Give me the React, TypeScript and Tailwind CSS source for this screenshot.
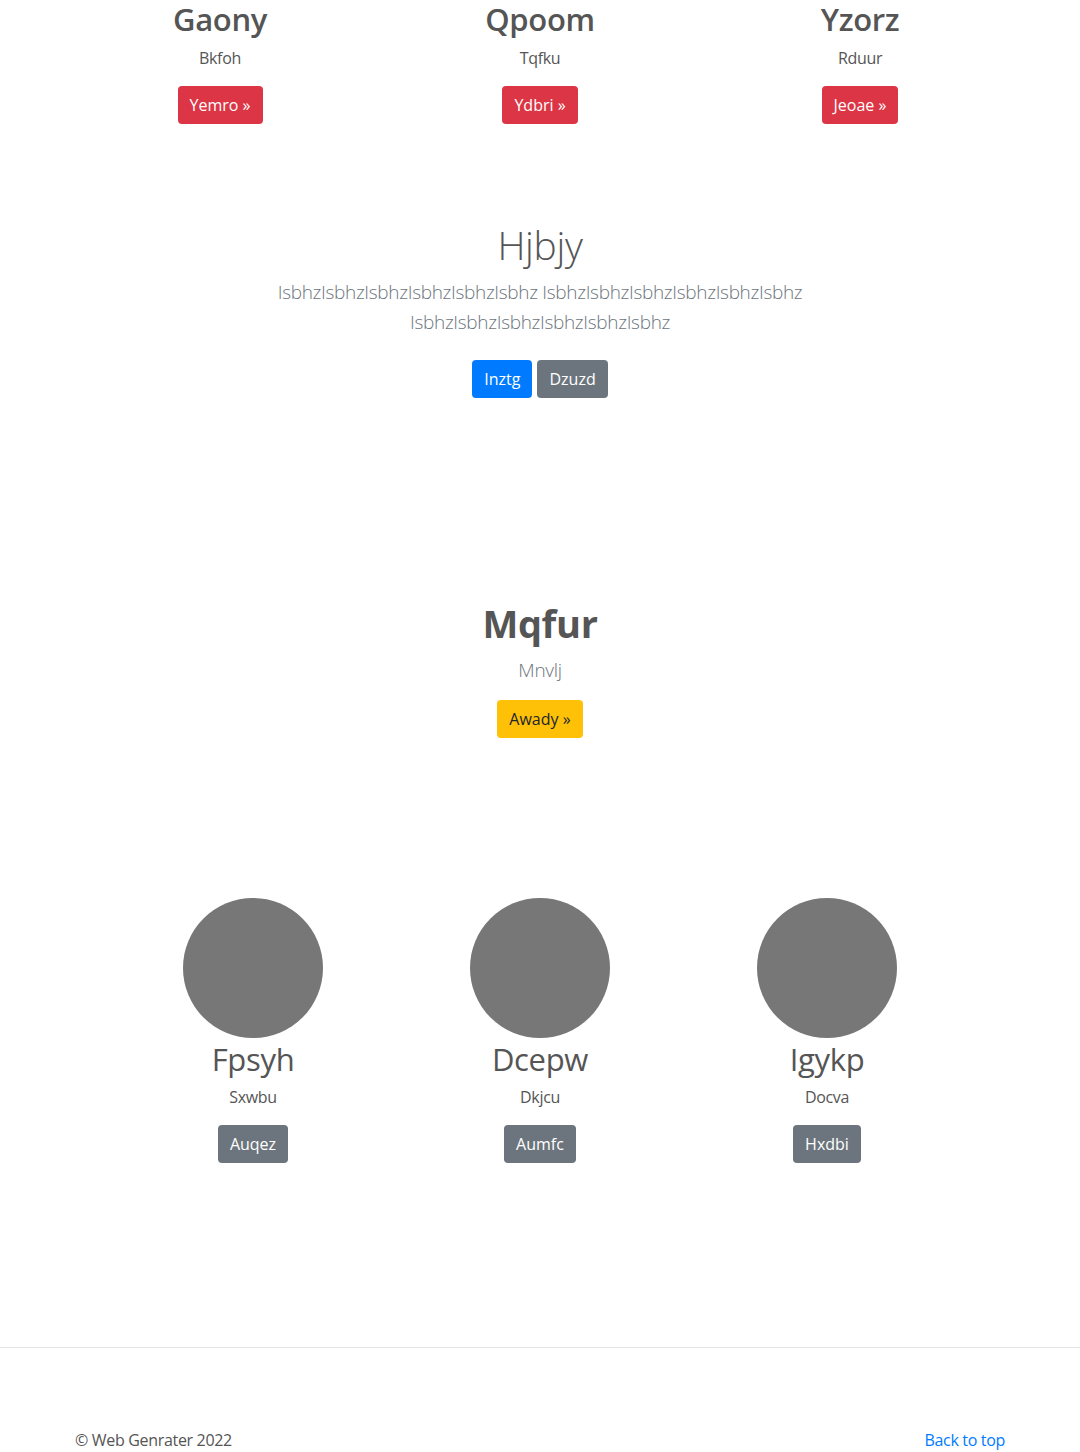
import React from "react";

const font = { fontFamily: '"Open Sans", "Noto Sans", sans-serif' };

function Btn({ children, cls }: { children: React.ReactNode; cls: string }) {
  return (
    <a className={`inline-block h-[38px] px-[12px] rounded-[4px] text-[16px] leading-[38px] tracking-normal ${cls}`}>{children}</a>
  );
}

export default function App() {
  const words = "IsbhzIsbhzIsbhzIsbhzIsbhzIsbhz";
  return (
    <div className="bg-white text-[#555] tracking-[-0.02em]" style={font}>
      {/* top three columns */}
      <div className="w-[960px] mx-auto grid grid-cols-3 text-center">
        {[
          ["Gaony", "Bkfoh", "Yemro »"],
          ["Qpoom", "Tqfku", "Ydbri »"],
          ["Yzorz", "Rduur", "Jeoae »"],
        ].map(([h, p, b]) => (
          <div key={h} className="flex flex-col items-center">
            <h2 className="text-[31px] font-semibold leading-[38px] text-[#555]">{h}</h2>
            <p className="mt-[8px] text-[16px] leading-[24px] text-[#555]">{p}</p>
            <div className="mt-[16px]">
              <Btn cls="bg-[#dc3545] text-white">{b}</Btn>
            </div>
          </div>
        ))}
      </div>

      {/* jumbotron */}
      <div className="mt-[97px] flex flex-col items-center text-center">
        <h1 className="text-[39px] font-light leading-[48px] text-[#555]">Hjbjy</h1>
        <p className="mt-[8px] w-[560px] text-[19px] font-light leading-[30px] text-[#6c757d]">
          {words} {words} {words}
        </p>
        <div className="mt-[23px] flex gap-[5px]">
          <Btn cls="bg-[#007bff] text-white">Inztg</Btn>
          <Btn cls="bg-[#6c757d] text-white">Dzuzd</Btn>
        </div>
      </div>

      {/* Mqfur */}
      <div className="mt-[201px] flex flex-col items-center text-center">
        <h1 className="text-[38px] font-bold leading-[48px] text-[#555]">Mqfur</h1>
        <p className="mt-[8px] text-[19px] font-light leading-[30px] text-[#6c757d]">Mnvlj</p>
        <div className="mt-[15px]">
          <Btn cls="bg-[#ffc107] text-[#212529]">Awady »</Btn>
        </div>
      </div>

      {/* circles */}
      <div className="mt-[160px] w-[861px] mx-auto grid grid-cols-3 text-center">
        {[
          ["Fpsyh", "Sxwbu", "Auqez"],
          ["Dcepw", "Dkjcu", "Aumfc"],
          ["Igykp", "Docva", "Hxdbi"],
        ].map(([h, p, b]) => (
          <div key={h} className="flex flex-col items-center">
            <div className="w-[140px] h-[140px] rounded-full bg-[#777]" />
            <h2 className="text-[31px] font-normal leading-[42px] text-[#555]">{h}</h2>
            <p className="mt-[5px] text-[16px] leading-[24px] text-[#555]">{p}</p>
            <div className="mt-[16px]">
              <Btn cls="bg-[#6c757d] text-white">{b}</Btn>
            </div>
          </div>
        ))}
      </div>

      {/* footer */}
      <div className="mt-[184px] border-t border-[#e5e5e5]">
        <div className="w-[930px] mx-auto pt-[80px] pb-[48px] flex justify-between text-[16px] leading-[24px]">
          <p className="text-[#555]">© Web Genrater 2022</p>
          <a className="text-[#007bff]">Back to top</a>
        </div>
      </div>
    </div>
  );
}
